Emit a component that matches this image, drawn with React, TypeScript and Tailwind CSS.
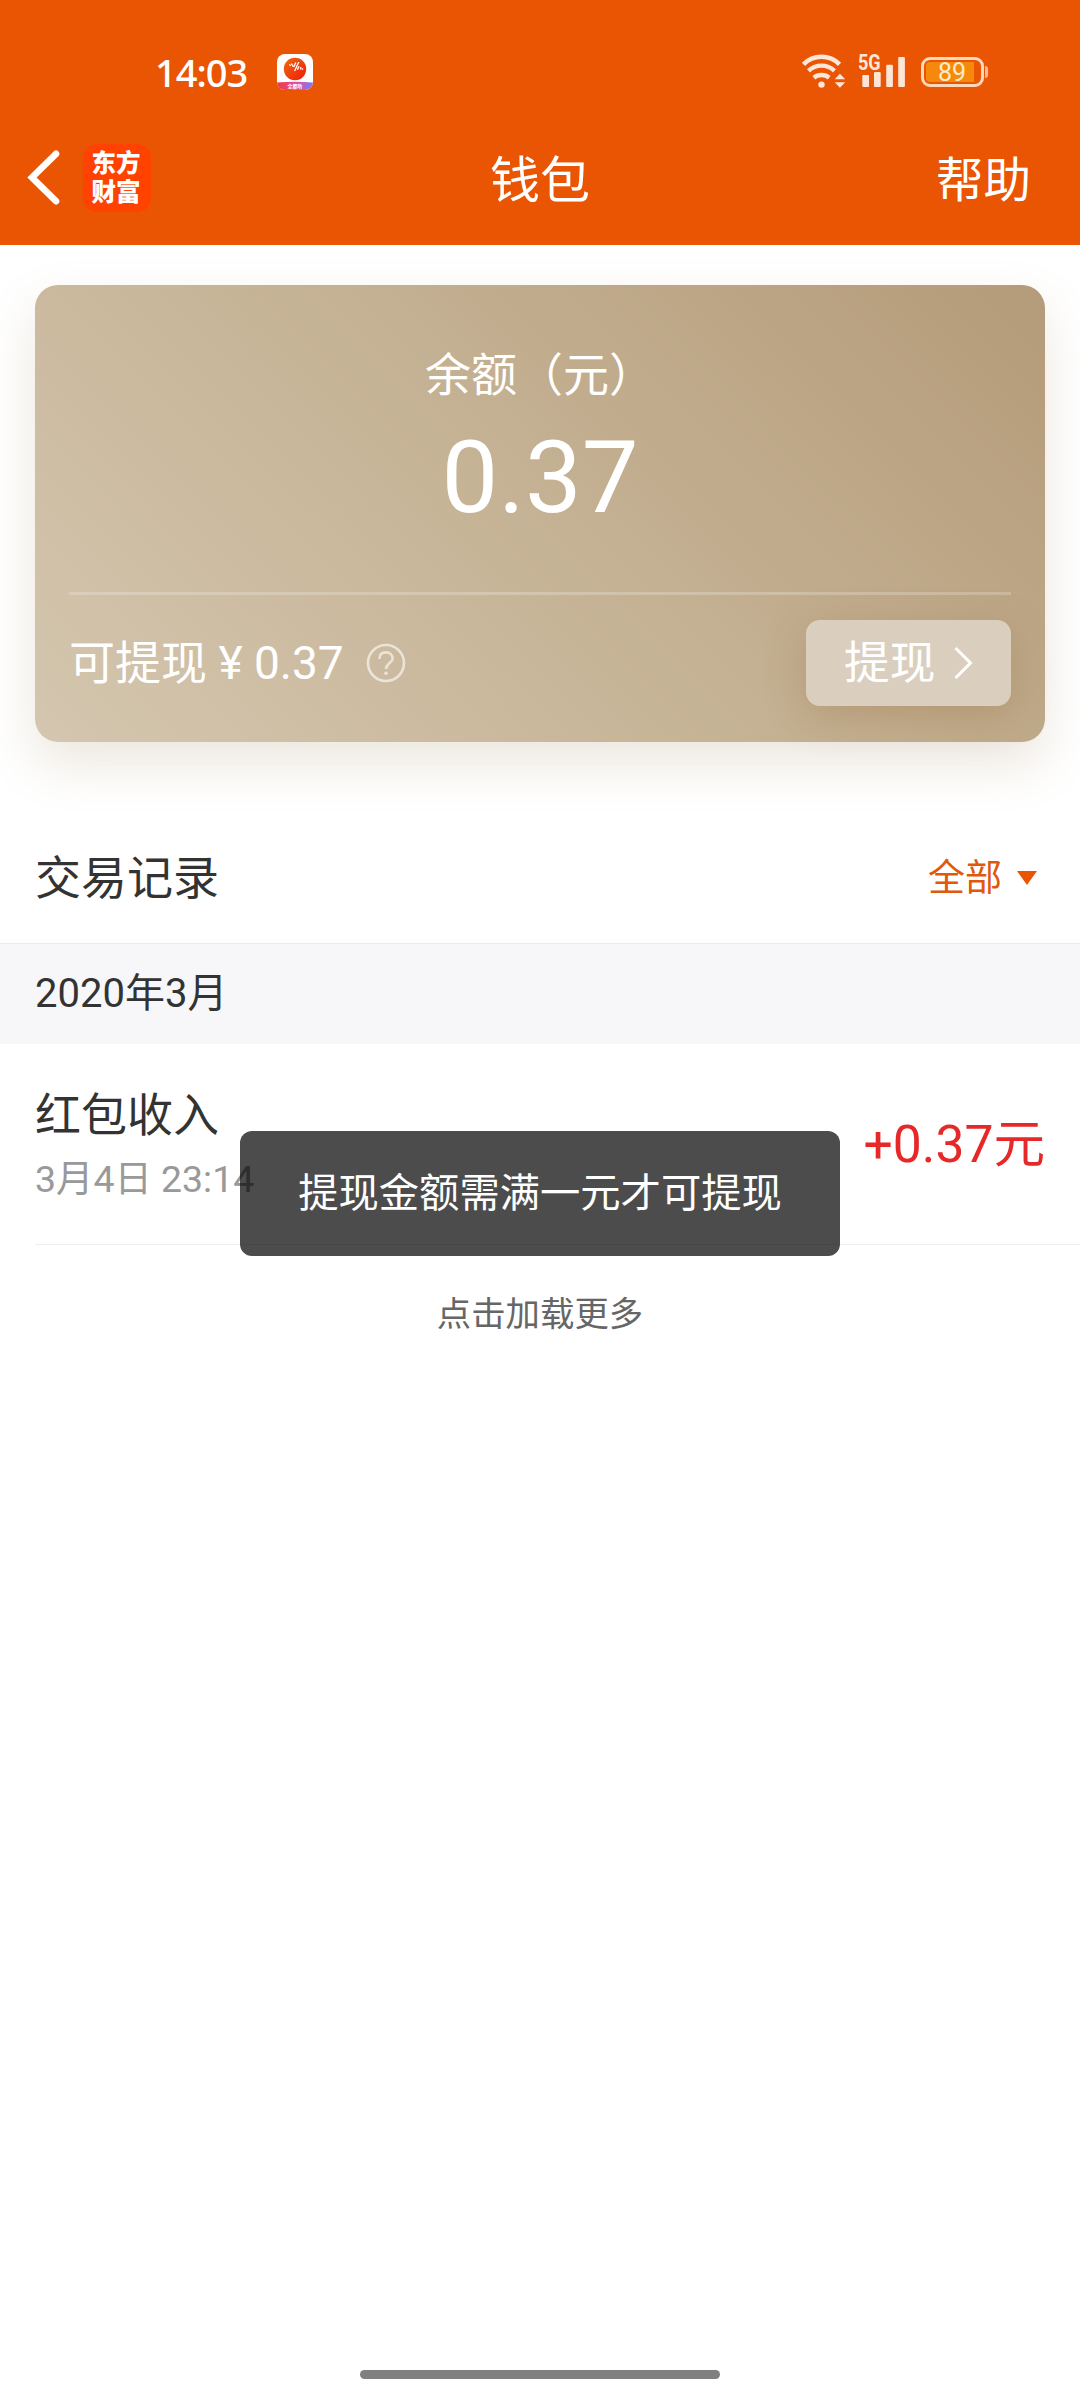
import React from "react";

function AppBadge() {
  return (
    <svg className="h-9 w-9" viewBox="0 0 36 36">
      <defs>
        <linearGradient id="badgeBand" x1="0" x2="1" y1="0" y2="0">
          <stop offset="0" stopColor="#f0383c" />
          <stop offset="0.5" stopColor="#e84aa0" />
          <stop offset="1" stopColor="#7a7cf0" />
        </linearGradient>
        <linearGradient id="badgeDisc" x1="0" x2="1" y1="0" y2="1">
          <stop offset="0" stopColor="#ee6a12" />
          <stop offset="1" stopColor="#f01a08" />
        </linearGradient>
        <clipPath id="badgeClip">
          <rect width="36" height="36" rx="8" />
        </clipPath>
      </defs>
      <g clipPath="url(#badgeClip)">
        <rect width="36" height="36" fill="#fff" />
        <circle cx="18" cy="15" r="11.2" fill="url(#badgeDisc)" />
        <path d="M0 28.6Q18 26.8 36 28.6V36H0Z" fill="url(#badgeBand)" />
        <path d="M12.4 10.4l1.2 1.4M14.4 9.6l1.8 3M18.8 8.6l-2 4.4M21.8 8l-4.2 9M22 12.4l-1.6 3.4M23.6 13l.4 2.6M25.4 14.4l.4 1.2" fill="none" stroke="#fff" strokeWidth="1.3" />
        <text x="18" y="34" fill="#fff" fontSize="5" fontWeight="700" textAnchor="middle">全都听</text>
      </g>
    </svg>
  );
}

function Wifi() {
  return (
    <svg className="h-[36px] w-[46px]" viewBox="0 0 46 36" fill="none" stroke="#fde5d8">
      <path d="M2.5 10.3A25.4 25.4 0 0 1 38.5 10.3" strokeWidth="4.6" />
      <path d="M7.5 16.8A19 19 0 0 1 33.5 16.8" strokeWidth="4.4" />
      <path d="M12.8 23.8A12 12 0 0 1 28.2 23.8" strokeWidth="4.4" />
      <circle cx="20.5" cy="30.6" r="3.2" fill="#fde5d8" stroke="none" />
      <path d="M33.7 25.2L38.9 19.7L44.2 25.2ZM33.7 28.2L38.9 33.8L44.2 28.2Z" fill="#fde5d8" stroke="none" />
    </svg>
  );
}

function Signal() {
  return (
    <div className="relative h-9 w-12">
      <span className="absolute -top-[5px] left-0 origin-left scale-x-[0.84] text-[21.5px] leading-[28px] font-bold text-[#fde5d8]">5G</span>
      <svg className="h-9 w-12" viewBox="0 0 48 36" fill="#fde5d8">
        <rect x="4.3" y="21" width="6.7" height="12" rx="1" />
        <rect x="16" y="18" width="6.7" height="15" rx="1" />
        <rect x="28.2" y="10.7" width="6.7" height="22.3" rx="1" />
        <rect x="40.2" y="3" width="6.7" height="30" rx="1" />
      </svg>
    </div>
  );
}

function Battery() {
  return (
    <div className="flex items-center">
      <div className="flex h-[30px] w-[63px] items-center rounded-[9px] border-3 border-[#fcd8ba] p-[2px]">
        <div className="flex h-5 w-12 items-center justify-center rounded-l-[4px] bg-[#f6890c]">
          <span className="pt-[2px] pl-[4px] text-[25px] leading-5 text-[#fdebc8]">89</span>
        </div>
      </div>
      <div className="ml-[1px] h-3 w-[3px] rounded-r-sm bg-[#f8bd98]" />
    </div>
  );
}

export default function App() {
  return (
    <div
      lang="zh-CN"
      className="relative flex h-[2400px] w-[1080px] flex-col overflow-hidden bg-white font-['Roboto','Noto_Sans_CJK_SC',sans-serif] text-[#333333]"
    >
      <header className="h-[245px] shrink-0 bg-[#ea5504] text-white">
        <div className="flex h-[144px] items-start pt-[54px]">
          <div className="flex h-9 items-center pl-[155px]">
            <span className="w-[122px] pb-[1px] font-['Noto_Sans'] text-[38px] leading-9 font-medium tracking-[-1px]">14:03</span>
            <AppBadge />
          </div>
          <div className="ml-auto flex h-9 items-center pr-[92px]">
            <Wifi />
            <div className="ml-[11px]"><Signal /></div>
            <div className="ml-[15px]"><Battery /></div>
          </div>
        </div>
        <div className="grid h-[68px] grid-cols-3 items-center">
          <div className="flex items-center pl-[26px]">
            <svg className="h-[56px] w-[34px]" viewBox="0 0 34 56" fill="none" stroke="#fff" strokeWidth="6.6">
              <path d="M30 3.8L6 27.5L30 51.2" strokeLinecap="round" />
            </svg>
            <div className="ml-[23px] flex h-[68px] w-[68px] flex-col items-center justify-center rounded-[14px] bg-[#ff4200] pr-[2px] text-[24.5px] leading-[29px] font-black">
              <span>东方</span>
              <span>财富</span>
            </div>
          </div>
          <h1 className="pt-[6px] text-center text-[50px] leading-[62px] font-normal">钱包</h1>
          <span className="pt-[6px] pr-[49px] text-right text-[47.5px] leading-[62px]">帮助</span>
        </div>
      </header>

      <section className="mx-[35px] mt-10 flex h-[457px] shrink-0 flex-col rounded-[23px] bg-[linear-gradient(45deg,#d4c6af_0%,#c5b294_50%,#b49b79_100%)] px-[34px] text-white shadow-[0_22px_50px_rgba(160,130,90,0.2)]">
        <div className="flex h-[307px] flex-col items-center pt-[60px]">
          <span className="text-[46px] leading-[60px]">余额（元）</span>
          <span className="mt-[8px] text-[101px] leading-[130px]">0.37</span>
        </div>
        <div className="h-[3px] shrink-0 bg-white/22" />
        <div className="mt-[25px] flex h-[86px] items-center">
          <span className="text-[46px] leading-[60px]">可提现 ¥ 0.37</span>
          <svg className="ml-[22px] h-10 w-10" viewBox="0 0 40 40" fill="none" stroke="#fff" strokeOpacity="0.6" strokeWidth="2.6">
            <circle cx="20" cy="20" r="18" />
            <path d="M13.4 16C13.4 11.6 16 9.4 20 9.4S26.6 12 26.6 15.4C26.6 20 20 20.4 20 26" />
            <circle cx="20" cy="30.3" r="1.8" fill="#fff" fillOpacity="0.6" stroke="none" />
          </svg>
          <button className="ml-auto flex h-[86px] w-[205px] items-center rounded-[14px] bg-[#dacfbf] pl-[38px] shadow-[0_10px_40px_rgba(150,110,60,0.3)]">
            <span className="pt-[2px] text-[45.7px] leading-[60px]">提现</span>
            <svg className="ml-[19px] h-8 w-5" viewBox="0 0 20 32" fill="none" stroke="#fff" strokeWidth="3">
              <path d="M1.5 1L16.5 16L1.5 31" />
            </svg>
          </button>
        </div>
      </section>

      <section className="mt-[71px] flex h-[131px] shrink-0 items-center justify-between border-b border-[#ebebed] pr-[43px] pl-[35px]">
        <h2 className="text-[46px] leading-[60px] font-normal">交易记录</h2>
        <div className="flex items-center text-[37px] leading-[60px] text-[#e0580c]">
          <span className="pt-px">全部</span>
          <svg className="ml-[15px] h-[14px] w-5" viewBox="0 0 20 14" fill="#ea5504">
            <path d="M0 0H20L10 14Z" />
          </svg>
        </div>
      </section>
      <div className="flex h-[100px] shrink-0 items-center bg-[#f7f7f9] pl-[35px] text-[40px] leading-[60px]">2020年3月</div>
      <section className="ml-[35px] flex h-[201px] shrink-0 items-center justify-between border-b border-[#ededed] pr-[35px]">
        <div className="flex flex-col pt-[2px]">
          <span className="text-[46px] leading-[68px]">红包收入</span>
          <span className="text-[37.4px] leading-[60px] text-[#999999]">3月4日 23:14</span>
        </div>
        <span className="pt-px text-[51.6px] leading-[60px] text-[#e62828]">+0.37元</span>
      </section>
      <div className="mt-[39px] text-center text-[34.4px] leading-[60px] text-[#666666]">点击加载更多</div>

      <div className="absolute top-[1131px] left-[240px] flex h-[125px] w-[600px] items-center justify-center rounded-[12px] bg-black/70 text-[40.3px] leading-[60px] text-white">
        提现金额需满一元才可提现
      </div>

      <div className="mx-auto mt-auto mb-[21px] h-[9px] w-[360px] rounded-full bg-[#808080]" />
    </div>
  );
}
